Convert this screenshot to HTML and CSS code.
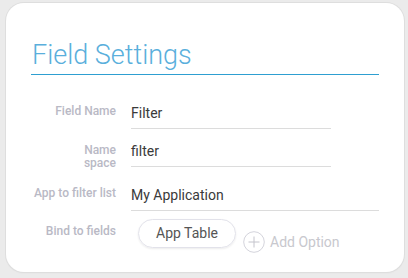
FILE: index.html
```html
<!DOCTYPE html>
<html lang="en">
<head>
    <meta charset="UTF-8">
    <meta name="viewport" content="width=device-width, initial-scale=1.0">
    <title>Field Settings</title>
    <link rel="stylesheet" href="styles.css">
</head>
<body>
    <div class="settings-card">
        <h3 class="title">Field Settings</h3>
        <div class="settings-form">
            <div class="form-row">
                <label class="form-label">Field Name</label>
                <div class="form-value short">Filter</div>
            </div>
            <div class="form-row">
                <label class="form-label two-line">Name<br>space</label>
                <div class="form-value short">filter</div>
            </div>
            <div class="form-row">
                <label class="form-label">App to filter list</label>
                <div class="form-value">My Application</div>
            </div>
            <div class="form-row bind-row">
                <label class="form-label">Bind to fields</label>
                <div class="bind-options">
                    <span class="option-pill">App Table</span>
                    <span class="add-option">
                        <svg class="add-icon" width="22" height="22" viewBox="0 0 22 22">
                            <circle cx="11" cy="11" r="10.3" fill="none" stroke="#d4d4dc" stroke-width="1"/>
                            <path d="M11 5.5v11M5.5 11h11" stroke="#c4c4cc" stroke-width="1"/>
                        </svg>
                        Add Option
                    </span>
                </div>
            </div>
        </div>
    </div>
</body>
</html>
```

FILE: styles.css
```css
:root {
    --page-bg: #ebebeb;
    --card-bg: #ffffff;
    --accent: #2e9fd1;
    --title-color: #5aafdc;
    --label-color: #b9b9c5;
    --text-color: #3a3a3a;
    --line-color: #dcdcdc;
    --muted: #c8c8ce;
}

body {
    margin: 0;
    padding: 3px 4px 6px 6px;
    background: var(--page-bg);
    font-family: Roboto, "Liberation Sans", sans-serif;
}

.settings-card {
    height: 269px;
    box-sizing: border-box;
    padding: 0 25px 0 25px;
    background: var(--card-bg);
    border-radius: 18px;
    box-shadow: 0 0 0 1px #dedede, 0 1px 2px rgba(0, 0, 0, 0.06);
}

.title {
    margin: 0;
    padding: 35px 0 2px 1px;
    font-size: 27px;
    line-height: 34px;
    font-weight: 300;
    color: var(--title-color);
    border-bottom: 1.5px solid var(--accent);
}

.settings-form {
    display: flex;
    flex-direction: column;
    padding-top: 28px;
}

.form-row {
    display: grid;
    grid-template-columns: 85px 1fr;
    column-gap: 15px;
    align-items: start;
    margin-bottom: 12px;
}

.form-label {
    padding-top: 1px;
    text-align: right;
    font-size: 12px;
    line-height: 15px;
    font-weight: 500;
    color: var(--label-color);
}

.form-label.two-line {
    padding: 3px 0;
    line-height: 13px;
}

.form-value {
    font-size: 14px;
    line-height: 20px;
    color: var(--text-color);
    padding-bottom: 5px;
    border-bottom: 1px solid var(--line-color);
}

.form-value.short {
    width: 200px;
}

.bind-row {
    margin-top: -4px;
    margin-bottom: 0;
}

.bind-row .form-label {
    padding-top: 5px;
}

.bind-options {
    display: flex;
    align-items: flex-start;
    gap: 7px;
    padding-left: 7px;
}

.option-pill {
    display: inline-block;
    width: 98px;
    height: 29px;
    box-sizing: border-box;
    border: 1px solid #e2e2ea;
    border-radius: 15px;
    box-shadow: 0 1px 2px rgba(0, 0, 0, 0.08);
    text-align: center;
    font-size: 14px;
    line-height: 27px;
    color: #555555;
}

.add-option {
    display: flex;
    align-items: center;
    gap: 5px;
    margin-top: 12px;
    font-size: 14px;
    color: var(--muted);
}
```
